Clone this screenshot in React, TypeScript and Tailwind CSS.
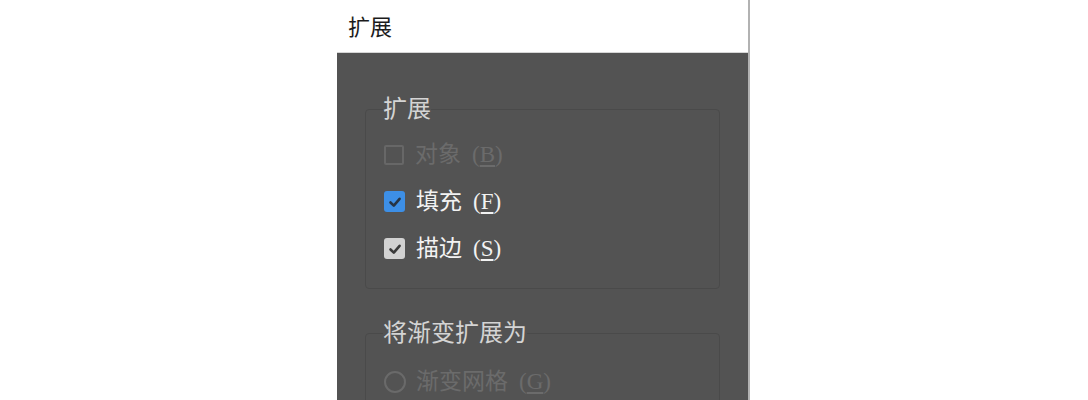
import React from "react";

const labelFont = {
  fontFamily: '"Liberation Serif", "Noto Sans CJK SC", serif',
};

function Check({ tone }: { tone: "blue" | "gray" | "off" }) {
  if (tone === "off") {
    return (
      <span className="h-[20px] w-[20px] shrink-0 rounded-[2px] border-2 border-[#676767]" />
    );
  }
  return (
    <span
      className={
        tone === "blue"
          ? "flex h-[21px] w-[21px] shrink-0 items-center justify-center rounded-[3px] bg-[#3d8fe6]"
          : "flex h-[21px] w-[21px] shrink-0 items-center justify-center rounded-[3px] bg-[#d2d2d2]"
      }
    >
      <svg viewBox="0 0 20 20" className="h-[20px] w-[20px]" fill="none" aria-hidden="true">
        <path
          d="M5.5 10.5 L8.8 13.6 L14.6 6.8"
          stroke={tone === "blue" ? "#263445" : "#3a3a3a"}
          strokeWidth="2.6"
          strokeLinecap="round"
          strokeLinejoin="round"
        />
      </svg>
    </span>
  );
}

function Label({ text, keyChar, color }: { text: string; keyChar: string; color: string }) {
  return (
    <span className={`flex items-center text-[23px] leading-none ${color}`} style={labelFont}>
      <span>{text}</span>
      <span className="ml-[11px]">
        (<span className="underline underline-offset-[3px]">{keyChar}</span>)
      </span>
    </span>
  );
}

function Row({
  tone,
  label,
  keyChar,
}: {
  tone: "blue" | "gray" | "off";
  label: string;
  keyChar: string;
}) {
  return (
    <div className="flex h-[47px] items-center gap-[11px]">
      <Check tone={tone} />
      <Label
        text={label}
        keyChar={keyChar}
        color={tone === "off" ? "text-[#6b6b6b]" : "text-[#f2f2f2]"}
      />
    </div>
  );
}

export default function App() {
  return (
    <div className="h-[400px] w-[1088px] overflow-hidden bg-white">
      <div className="ml-[337px] h-[400px] w-[413px] border-r-2 border-[#b2b2b2] bg-[#535353]">
        {/* Title bar */}
        <div
          className="flex h-[53px] items-center border-b border-[#d6d6d6] bg-white pb-[2px] pl-[11px] text-[22px] text-[#1b1b1b]"
          style={{ fontFamily: '"Noto Sans CJK SC", sans-serif' }}
        >
          扩展
        </div>

        <div className="px-[28px] pt-[43px]">
          <fieldset className="rounded-[4px] border border-[#4a4a4a] px-[18px] pb-[16px] pt-[9px]">
            <legend
              className="-ml-[1px] px-0 text-[24px] leading-[26px] text-[#d4d4d4]"
              style={labelFont}
            >
              扩展
            </legend>
            <Row tone="off" label="对象" keyChar="B" />
            <Row tone="blue" label="填充" keyChar="F" />
            <Row tone="gray" label="描边" keyChar="S" />
          </fieldset>

          <fieldset className="mt-[31px] rounded-[4px] border border-[#4a4a4a] px-[18px] pb-[17px] pt-[12px]">
            <legend
              className="-ml-[1px] px-0 text-[24px] leading-[26px] text-[#d4d4d4]"
              style={labelFont}
            >
              将渐变扩展为
            </legend>
            <div className="flex h-[47px] items-center gap-[10px]">
              <span className="h-[22px] w-[22px] shrink-0 rounded-full border-2 border-[#6a6a6a]" />
              <Label text="渐变网格" keyChar="G" color="text-[#6b6b6b]" />
            </div>
          </fieldset>
        </div>
      </div>
    </div>
  );
}
